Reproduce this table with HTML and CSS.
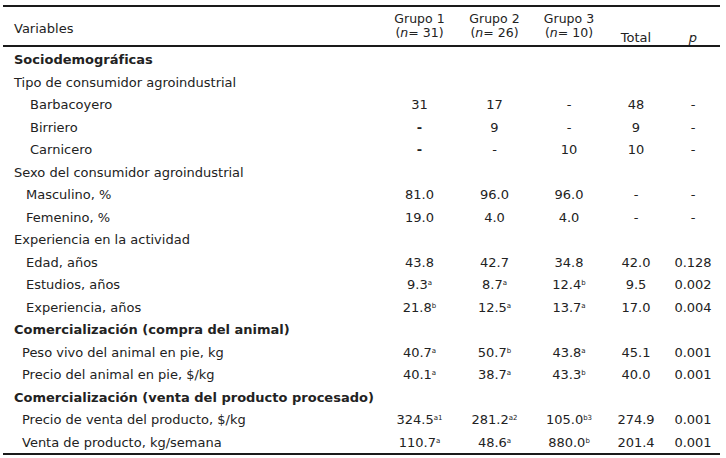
FILE: index.html
```html
<!DOCTYPE html>
<html lang="es">
<head>
<meta charset="utf-8">
<link rel="stylesheet" href="styles.css">
<title>Tabla</title>
</head>
<body>
<table class="tbl">
  <colgroup>
    <col class="c-var"><col class="c-g"><col class="c-g"><col class="c-g3"><col class="c-t"><col class="c-p">
  </colgroup>
  <thead>
    <tr>
      <th class="h-var">Variables</th>
      <th class="h-num"><span class="hl">Grupo 1</span><span class="hl">(<i>n</i>= 31)</span></th>
      <th class="h-num"><span class="hl">Grupo 2</span><span class="hl">(<i>n</i>= 26)</span></th>
      <th class="h-num"><span class="hl">Grupo 3</span><span class="hl">(<i>n</i>= 10)</span></th>
      <th class="h-low">Total</th>
      <th class="h-low"><i>p</i></th>
    </tr>
  </thead>
  <tbody>
    <tr><td class="sec" colspan="6">Sociodemográficas</td></tr>
    <tr><td class="l0" colspan="6">Tipo de consumidor agroindustrial</td></tr>
    <tr><td class="l2">Barbacoyero</td><td>31</td><td>17</td><td>-</td><td>48</td><td>-</td></tr>
    <tr><td class="l2">Birriero</td><td><b>-</b></td><td>9</td><td>-</td><td>9</td><td>-</td></tr>
    <tr><td class="l2">Carnicero</td><td><b>-</b></td><td>-</td><td>10</td><td>10</td><td>-</td></tr>
    <tr><td class="l0" colspan="6">Sexo del consumidor agroindustrial</td></tr>
    <tr><td class="l1">Masculino, %</td><td>81.0</td><td>96.0</td><td>96.0</td><td>-</td><td>-</td></tr>
    <tr><td class="l1">Femenino, %</td><td>19.0</td><td>4.0</td><td>4.0</td><td>-</td><td>-</td></tr>
    <tr><td class="l0" colspan="6">Experiencia en la actividad</td></tr>
    <tr><td class="l1">Edad, años</td><td>43.8</td><td>42.7</td><td>34.8</td><td>42.0</td><td>0.128</td></tr>
    <tr><td class="l1">Estudios, años</td><td>9.3<sup>a</sup></td><td>8.7<sup>a</sup></td><td>12.4<sup>b</sup></td><td>9.5</td><td>0.002</td></tr>
    <tr><td class="l1">Experiencia, años</td><td>21.8<sup>b</sup></td><td>12.5<sup>a</sup></td><td>13.7<sup>a</sup></td><td>17.0</td><td>0.004</td></tr>
    <tr><td class="sec" colspan="6">Comercialización (compra del animal)</td></tr>
    <tr><td class="l1b">Peso vivo del animal en pie, kg</td><td>40.7<sup>a</sup></td><td>50.7<sup>b</sup></td><td>43.8<sup>a</sup></td><td>45.1</td><td>0.001</td></tr>
    <tr><td class="l1b">Precio del animal en pie, $/kg</td><td>40.1<sup>a</sup></td><td>38.7<sup>a</sup></td><td>43.3<sup>b</sup></td><td>40.0</td><td>0.001</td></tr>
    <tr><td class="sec" colspan="6">Comercialización (venta del producto procesado)</td></tr>
    <tr><td class="l1b">Precio de venta del producto, $/kg</td><td>324.5<sup>a1</sup></td><td>281.2<sup>a2</sup></td><td>105.0<sup>b3</sup></td><td>274.9</td><td>0.001</td></tr>
    <tr class="last"><td class="l1b">Venta de producto, kg/semana</td><td>110.7<sup>a</sup></td><td>48.6<sup>a</sup></td><td>880.0<sup>b</sup></td><td>201.4</td><td>0.001</td></tr>
  </tbody>
</table>
</body>
</html>
```
FILE: styles.css
```css
html, body {
  margin: 0;
  padding: 0;
  background: #ffffff;
}

body {
  padding: 5px 0 0 3px;
  font-family: "DejaVu Sans", "Liberation Sans", sans-serif;
  font-size: 13px;
  color: #222222;
}

.tbl {
  width: 717px;
  border-collapse: separate;
  border-spacing: 0;
  table-layout: fixed;
}

.c-var { width: 379px; }
.c-g { width: 75px; }
.c-g3 { width: 74px; }
.c-t { width: 60px; }
.c-p { width: 54px; }

.tbl thead th {
  box-sizing: border-box;
  height: 42px;
  padding: 0;
  font-weight: normal;
  text-align: center;
  border-top: 2px solid #1a1a1a;
  border-bottom: 2px solid #1a1a1a;
}

.tbl thead th.h-var {
  text-align: left;
  padding: 4px 0 0 11px;
  vertical-align: middle;
}

.tbl thead th.h-num {
  vertical-align: bottom;
  padding-bottom: 4px;
  font-size: 12.5px;
}

.hl {
  display: block;
  line-height: 14.6px;
}

.tbl thead th.h-low {
  vertical-align: bottom;
  padding-bottom: 1px;
  line-height: 13px;
}

.tbl tbody td {
  box-sizing: border-box;
  height: 22.5px;
  padding: 3.5px 0 0 0;
  text-align: center;
  vertical-align: middle;
  white-space: nowrap;
  line-height: 14px;
}

.tbl tbody td.sec,
.tbl tbody td.l0,
.tbl tbody td.l1,
.tbl tbody td.l1b,
.tbl tbody td.l2 {
  text-align: left;
}

.tbl tbody td.sec { padding-left: 11px; font-weight: bold; }
.tbl tbody td.l0 { padding-left: 11px; }
.tbl tbody td.l1 { padding-left: 23px; }
.tbl tbody td.l1b { padding-left: 19px; }
.tbl tbody td.l2 { padding-left: 27px; }

.tbl tbody tr.last td {
  height: 25.5px;
  padding-top: 5px;
  padding-bottom: 2px;
  border-bottom: 2px solid #1a1a1a;
}

sup {
  font-size: 7px;
  line-height: 0;
  vertical-align: 4px;
}
```
